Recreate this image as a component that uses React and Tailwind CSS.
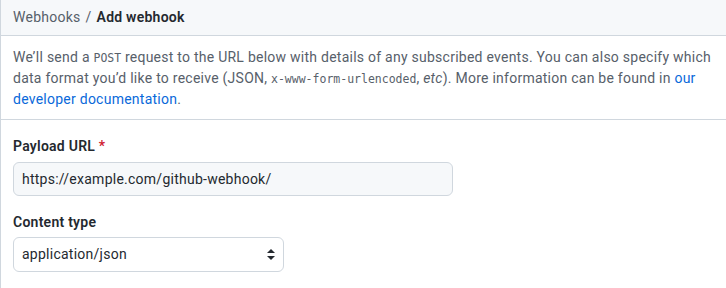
export default function App() {
  return (
    <div className="min-h-[288px] bg-white border-l border-[#d0d7de] text-[14px] tracking-[0.25px] text-[#24292f] font-['Roboto','Liberation_Sans',sans-serif]">
      {/* breadcrumb header */}
      <div className="h-[36px] flex items-center px-3 bg-[#f6f8fa] border-b border-[#d0d7de]">
        <span className="text-[#57606a]">Webhooks</span>
        <span className="text-[#57606a] mx-[5px]">/</span>
        <span className="font-semibold">Add webhook</span>
      </div>

      {/* description */}
      <p className="px-3 pt-[11px] pb-[9px] leading-[21px] text-[#57606a] border-b border-[#d0d7de]">
        We’ll send a <code className="font-['DejaVu_Sans_Mono',monospace] text-[11.5px] tracking-normal leading-none">POST</code> request to the URL below
        with details of any subscribed events. You can also specify which
        <br />
        data format you’d like to receive (JSON,{' '}
        <code className="font-['DejaVu_Sans_Mono',monospace] text-[11.5px] tracking-normal leading-none">x-www-form-urlencoded</code>, <em>etc</em>). More
        information can be found in <a className="text-[#0969da]" href="#">our</a>
        <br />
        <a className="text-[#0969da]" href="#">developer documentation</a>.
      </p>

      <form className="px-3 pt-4">
        <label className="block font-semibold leading-5 mb-[6px]">
          Payload URL <span className="text-[#cf222e]">*</span>
        </label>
        <input
          type="text"
          defaultValue="https://example.com/github-webhook/"
          className="block w-[440px] h-[34px] px-2 rounded-md border border-[#d0d7de] bg-[#f6f8fa] text-[#24292f] tracking-[0.25px] outline-none"
        />

        <label className="block font-semibold leading-5 mt-4 mb-[5px]">Content type</label>
        <div className="relative w-[271px]">
          <select className="block w-full h-[35px] pl-2 pr-8 rounded-md border border-[#d0d7de] bg-white text-[#24292f] tracking-[0.25px] appearance-none outline-none">
            <option>application/json</option>
            <option>application/x-www-form-urlencoded</option>
          </select>
          <svg className="absolute right-[9px] top-[12px] pointer-events-none" width="8" height="11" viewBox="0 0 8 11">
            <path d="M4 0 L8 4 L0 4 Z M0 7 L8 7 L4 11 Z" fill="#24292f" />
          </svg>
        </div>
      </form>
    </div>
  )
}
